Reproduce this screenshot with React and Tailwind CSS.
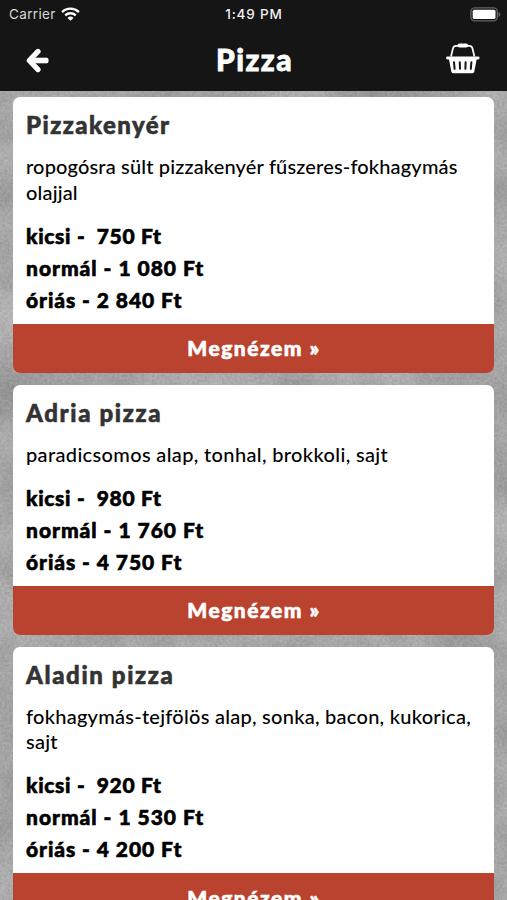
import React from 'react';

const pizzas = [
    {
        name: 'Pizzakenyér',
        nameSpacing: 'tracking-[1.450px]',
        lines: ['ropogósra sült pizzakenyér fűszeres-fokhagymás', 'olajjal'],
        spacing: 'tracking-[0.160px]',
        prices: ['kicsi -  750 Ft', 'normál - 1 080 Ft', 'óriás - 2 840 Ft'],
    },
    {
        name: 'Adria pizza',
        nameSpacing: 'tracking-[1.650px]',
        lines: ['paradicsomos alap, tonhal, brokkoli, sajt'],
        spacing: 'tracking-[0.350px]',
        prices: ['kicsi -  980 Ft', 'normál - 1 760 Ft', 'óriás - 4 750 Ft'],
    },
    {
        name: 'Aladin pizza',
        nameSpacing: 'tracking-[1.620px]',
        lines: ['fokhagymás-tejfölös alap, sonka, bacon, kukorica,', 'sajt'],
        spacing: 'tracking-[0.260px]',
        prices: ['kicsi -  920 Ft', 'normál - 1 530 Ft', 'óriás - 4 200 Ft'],
    },
];

const priceSpacing = ['tracking-[0.680px]', 'tracking-[0.980px]', 'tracking-[0.930px]'];

const WifiIcon = () => (
    <svg className="w-[19px] h-[14px]" viewBox="0 0 19 14" fill="none" stroke="#fff" strokeWidth="2.3">
        <path d="M1.1 5.1a12 12 0 0 1 16.8 0" />
        <path d="M4.2 8.4a7.6 7.6 0 0 1 10.6 0" />
        <path d="M9.5 13.8 6.5 10.9a4.3 4.3 0 0 1 6 0z" fill="#fff" stroke="none" />
    </svg>
);

const BatteryIcon = () => (
    <svg className="w-[31px] h-[15px]" viewBox="0 0 31 15">
        <rect x="0.9" y="0.9" width="26.4" height="13" rx="3.8" fill="none" stroke="#626262" strokeWidth="1.4" />
        <rect x="2.7" y="2.7" width="22.8" height="9.4" rx="1.6" fill="#fff" />
        <path d="M28.5 5v5c1.2-.5 1.9-1.4 1.9-2.5S29.7 5.5 28.5 5z" fill="#626262" />
    </svg>
);

const BackIcon = () => (
    <svg className="w-[24px] h-[25px]" viewBox="0 0 24 25" fill="none" stroke="#fff" strokeLinejoin="round">
        <path d="M12 3.400 3.300 12.500l8.700 9.100" strokeWidth="5.200" strokeLinecap="round" />
        <path d="M4.500 12.500h16.500" strokeWidth="5.600" />
        <path d="M20.800 11.400v2.200" strokeWidth="3.400" strokeLinecap="round" />
    </svg>
);

const BasketIcon = () => (
    <svg className="w-[34px] h-[31px]" viewBox="0 0 34 31" fill="none" stroke="#fff">
        <path d="M5 13.500 7 5.300Q7.600 2.900 10 2.900h13.400q2.400 0 3 2.400l2 8.200" strokeWidth="1.700" />
        <path d="M13.400 2.500h6.800" strokeWidth="3.800" strokeLinecap="round" />
        <path d="M1.500 15h30.600" strokeWidth="2.900" strokeLinecap="round" />
        <path d="M2.900 16h27.800l-2.400 12.400q-.4 1.900-2.300 1.900H7.600q-1.900 0-2.300-1.900z" fill="#fff" stroke="none" />
        <path d="m8 19.200.6 6.600M13.800 19.200l.2 6.600M19.600 19.200l-.2 6.600M25.400 19.200l-.6 6.600" stroke="#151515" strokeWidth="2" strokeLinecap="round" />
    </svg>
);

// Concrete wall behind the list
const Concrete = () => (
    <svg className="absolute inset-0 w-full h-full" preserveAspectRatio="none">
        <filter id="patches" x="0" y="0" width="100%" height="100%" colorInterpolationFilters="sRGB">
            <feTurbulence type="fractalNoise" baseFrequency="0.014" numOctaves="5" seed="8" />
            <feColorMatrix values="0.26 0 0 0 0.52  0.26 0 0 0 0.52  0.26 0 0 0 0.52  0 0 0 0 1" />
        </filter>
        <filter id="grain" x="0" y="0" width="100%" height="100%" colorInterpolationFilters="sRGB">
            <feTurbulence type="fractalNoise" baseFrequency="0.4" numOctaves="2" seed="3" />
            <feColorMatrix values="0.6 0 0 0 0.34  0.6 0 0 0 0.34  0.6 0 0 0 0.34  0 0 0 0 0.22" />
        </filter>
        <rect width="100%" height="100%" filter="url(#patches)" />
        <rect width="100%" height="100%" filter="url(#grain)" />
    </svg>
);

const StatusBar = () => (
    <div className="h-7 grid grid-cols-3 items-center pl-[9px] pr-[6px] text-[13.500px] font-['Inter',sans-serif]">
        <div className="flex items-center gap-[5px] text-[#d8d8d8] tracking-[0.350px]">
            <span>Carrier</span>
            <WifiIcon />
        </div>
        <div className="text-center text-[#f0f0f0] font-medium tracking-[0.850px] pr-[2px]">1:49 PM</div>
        <div className="flex justify-end"><BatteryIcon /></div>
    </div>
);

const PizzaCard = ({ pizza }) => (
    <div className="shrink-0 bg-white rounded-[7px] overflow-hidden">
        <div className="px-[13px] pt-[13px] pb-2">
            <h2 className={`text-[24px] leading-[30px] font-black text-[#333] whitespace-pre [-webkit-text-stroke:0.600px_#333] ${pizza.nameSpacing}`}>
                {pizza.name}
            </h2>
            <div className={`mt-[14px] text-[20px] leading-[25.500px] font-medium text-black whitespace-pre ${pizza.spacing}`}>
                {pizza.lines.map((line) => (
                    <div key={line}>{line}</div>
                ))}
            </div>
            <div className="mt-[14.500px] text-[21px] leading-8 font-black text-black whitespace-pre [-webkit-text-stroke:0.600px_#000]">
                {pizza.prices.map((price, i) => (
                    <div key={price} className={priceSpacing[i]}>{price}</div>
                ))}
            </div>
        </div>
        <button className="block w-full h-[49px] pl-px bg-[#b9432f] text-white text-[21px] font-black tracking-[1.500px] [-webkit-text-stroke:0.600px_#fff]">
            Megnézem »
        </button>
    </div>
);

export default function App() {
    return (
        <div className="relative isolate w-full h-[900px] overflow-hidden flex flex-col bg-[#a3a3a3] font-['Lato',sans-serif]">
            <Concrete />
            <header className="relative shrink-0 h-[91px] bg-[#151515]">
                <StatusBar />
                <div className="flex items-center justify-between h-[61px] pl-[26px] pr-[27px]">
                    <div className="pt-[4px]"><BackIcon /></div>
                    <h1 className="text-[30px] leading-none font-black text-white tracking-[1.500px] pl-[13px] [-webkit-text-stroke:0.800px_#fff]">Pizza</h1>
                    <BasketIcon />
                </div>
            </header>
            <main className="relative flex flex-col gap-3 pt-[6px] px-[13px]">
                {pizzas.map((pizza) => (
                    <PizzaCard key={pizza.name} pizza={pizza} />
                ))}
            </main>
        </div>
    );
}
